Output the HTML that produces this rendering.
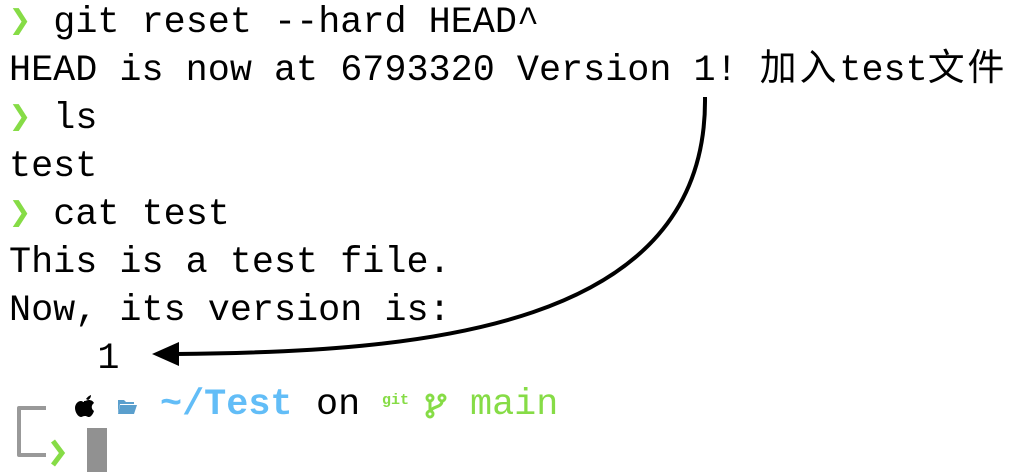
<!DOCTYPE html>
<html><head><meta charset="utf-8"><style>
html,body{margin:0;padding:0;background:#fff;width:1032px;height:472px;overflow:hidden;position:relative}
.t{position:absolute;left:9px;top:-1px;font-family:"Liberation Mono","Noto Sans CJK SC",monospace;font-size:36.8px;line-height:48px;color:#000;white-space:pre}
.g{color:#86dc46;font-weight:bold}
.c{letter-spacing:3px}
.b{color:#62bdf7;font-weight:bold}
.gr{color:#86dc46}
.a{position:absolute;font-family:"Liberation Mono",monospace;font-size:36.8px;line-height:48px;white-space:pre;top:381px}
</style></head><body>
<div class="t"><span class="g">❯</span> git reset --hard HEAD^
HEAD is now at 6793320 Version 1! <span class="c">加入</span>test<span class="c">文件</span>
<span class="g">❯</span> ls
test
<span class="g">❯</span> cat test
This is a test file.
Now, its version is:
    1</div>
<div class="a b" style="left:160px">~/Test</div>
<div class="a" style="left:316px">on</div>
<div class="a gr" style="left:382px;font-size:15px;font-weight:bold;top:377px">git</div>
<div class="a gr" style="left:470px">main</div>
<svg width="1032" height="472" style="position:absolute;left:0;top:0">
<path d="M705,97 C708,330 420,352 176,354" fill="none" stroke="#000" stroke-width="4"/>
<polygon points="152,354 179,342 179,366" fill="#000"/>
<path d="M46,408 H19 V455 H46" fill="none" stroke="#999" stroke-width="4" stroke-linejoin="round"/>
<path d="M53,441 L62,453 L53,465" fill="none" stroke="#86dc46" stroke-width="5"/>
<rect x="87" y="428" width="20" height="44" fill="#919191"/>
<path d="M86,399 c2,-3 5,-4 5,-4 c0,2 -1,4 -3,5z M84,401 c2,0 3,-1 5,-1 c2,0 4,1 5,3 c-3,2 -3,6 0,8 c-1,3 -3,6 -5,6 c-2,0 -2,-1 -4,-1 c-2,0 -3,1 -4,1 c-3,0 -6,-5 -6,-9 c0,-4 3,-7 6,-7 c1,0 2,1 3,1z" fill="#000"/>
<path d="M118,400 h6 l2,2 h8 v2 h-14 l-2,9z M120,405 h17 l-3,9 h-16z" fill="#5a9fcd"/>
<g fill="none" stroke="#86dc46" stroke-width="3">
<circle cx="430" cy="398" r="3"/><circle cx="430" cy="414" r="3"/><circle cx="442" cy="398" r="3"/>
<path d="M430,401 V411 M442,401 C442,408 432,406 431,411"/></g>
</svg>
</body></html>
